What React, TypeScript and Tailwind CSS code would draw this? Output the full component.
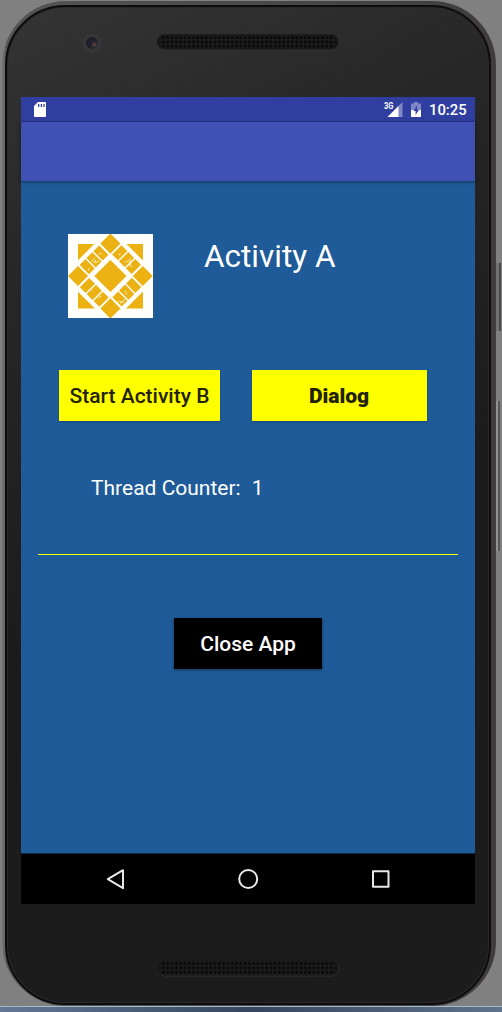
import React from "react";

const GOLD = "#ecb213";

function Grille({ id }: { id: string }) {
  return (
    <svg width="184" height="18" viewBox="0 0 184 18" className="block">
      <defs>
        <pattern id={id} width="4.3" height="4.3" patternUnits="userSpaceOnUse" x="1" y="2.6">
          <rect width="4.3" height="4.3" fill="#1a1a1a" />
          <circle cx="2.1" cy="2.1" r="1.2" fill="#020202" />
        </pattern>
      </defs>
      <rect x="1.5" y="2" width="181.5" height="15" rx="7.5" fill="#171717" stroke="#3c3c3c" strokeOpacity="0.7" />
      <rect x="1" y="1.3" width="181.5" height="15" rx="7.5" fill="#171717" />
      <rect x="4.3" y="2.6" width="175" height="12.9" rx="5" fill={`url(#${id})`} />
    </svg>
  );
}

function Logo() {
  const cells = [-14, -4.3, 5.4];
  return (
    <svg width="85" height="84" viewBox="0 0 85 84" className="block">
      <rect width="85" height="84" fill="#fffefa" />
      <rect x="10" y="10" width="65" height="64.5" fill={GOLD} />
      <g transform="translate(42.4 42) rotate(45)">
        <rect x="-34" y="-34" width="68" height="68" fill="#fffefa" />
        <rect x="-11.4" y="-11.4" width="22.8" height="22.8" fill={GOLD} />
        {[0, 90, 180, 270].map((a) => (
          <g key={a} transform={`rotate(${a})`} fill={GOLD}>
            <rect x="-30" y="-30" width="14.2" height="14.2" />
            {cells.map((x) => (
              <rect key={x} x={x} y="-29.6" width="8.3" height="13.2" />
            ))}
          </g>
        ))}
      </g>
      <g fill="none" stroke="#fff5d5" strokeWidth="1.2" strokeDasharray="1.4 1">
        <path d="M24 26l3 3 4-2M26 24l2 4M31 20l3-1M20 35l2 1M51 21l2-2M57 28l4-1 2-3M60 31l4 2M62 27l1 5M57 57l2 4M50 67l5 1 2-3M52 69l4-2M30 64l3-2M22 55l2 2" />
      </g>
    </svg>
  );
}

function StatusBar() {
  return (
    <div className="flex h-[25px] shrink-0 items-start bg-[#303f9f] pl-[13px] pr-2 text-white shadow-[inset_0_-1px_1px_#29368c]">
      <svg width="12" height="15" viewBox="0 0 12 15" className="mt-[5px]">
        <path d="M4 0h7q1 0 1 1v13q0 1-1 1H1q-1 0-1-1V4z" fill="#fff" />
        <path d="M4.7 2v3M7.4 2v3M10 2v3" stroke="#303f9f" strokeWidth="1.3" />
      </svg>
      <div className="ml-auto flex items-start">
        <svg width="19" height="16" viewBox="0 0 19 16" className="mt-[4px]">
          <path d="M18.5 1v15h-15z" fill="#7f88c6" />
          <path d="M14.5 5v11h-11z" fill="#fff" />
          <path d="M0 0h9.8v7.5H0z" fill="#303f9f" />
          <text x="0" y="7.7" fill="#fff" fontFamily="Roboto, sans-serif" fontSize="8.6" fontWeight="700" textLength="9.3" lengthAdjust="spacingAndGlyphs">3G</text>
        </svg>
        <svg width="10" height="15" viewBox="0 0 10 15" className="ml-2 mt-[5px]">
          <path d="M3 0h4v1.5h3V8H0V1.5h3z" fill="#7f88c6" />
          <path d="M0 8h10v7H0z" fill="#fff" />
          <path d="M6 3.5L2.5 9H4.6v4L8 7.8H6z" fill="#303f9f" />
        </svg>
        <span className="ml-[8px] mt-[3px] w-[38px] whitespace-nowrap text-[14.8px] font-medium leading-5">10:25</span>
      </div>
    </div>
  );
}

function NavBar() {
  return (
    <div className="flex h-[51px] shrink-0 items-center justify-between bg-black px-[83px] shadow-[inset_0_1px_0_#0e2b45]">
      <svg width="24" height="24" viewBox="0 0 24 24" fill="none" stroke="#e8e8e8" strokeWidth="2" strokeLinejoin="round">
        <path d="M19 3.2v18L3.8 12.2z" />
      </svg>
      <svg width="24" height="24" viewBox="0 0 24 24" fill="none" stroke="#e8e8e8" strokeWidth="2">
        <circle cx="12.2" cy="12" r="9" />
      </svg>
      <svg width="24" height="24" viewBox="0 0 24 24" fill="none" stroke="#e8e8e8" strokeWidth="2" strokeLinejoin="round">
        <path d="M5 4.2h15.5v15.5h-15.5z" />
      </svg>
    </div>
  );
}

function Screen() {
  return (
    <div className="flex h-[807px] w-[454px] flex-col bg-[#1e5b98] font-[Roboto,sans-serif]">
      <StatusBar />
      <div className="h-[59px] shrink-0 bg-[#3f51b5] shadow-[0_1px_4px_rgba(0,0,0,0.45)]" />
      <main className="flex min-h-0 flex-1 flex-col text-white">
        <div className="mt-[53px] flex pl-[47px]">
          <Logo />
          <h1 className="ml-[51px] mt-[3px] whitespace-nowrap text-[31.5px] leading-10">Activity A</h1>
        </div>
        <div className="mt-[52px] flex gap-8 pl-[38px] text-[21px] text-[#222200]">
          <button className="h-[51px] w-[161px] whitespace-nowrap bg-[#ffff00] pt-0.5 font-medium shadow-[0_1px_2px_rgba(0,0,0,0.2)]">Start Activity B</button>
          <button className="h-[51px] w-[175px] bg-[#ffff00] pr-px pt-0.5 font-black shadow-[0_1px_2px_rgba(0,0,0,0.2)]">Dialog</button>
        </div>
        <div className="mt-[51px] flex gap-[11px] pl-[70px] text-[21px] leading-8">
          <span className="whitespace-nowrap">Thread Counter:</span>
          <span>1</span>
        </div>
        <div className="mx-[17px] mt-[50px] h-px shrink-0 bg-[#ffff00]" />
        <button className="ml-[153px] mt-[63px] h-[51px] w-[148px] bg-black pt-0.5 text-[21px] font-medium shadow-[0_1px_3px_rgba(0,0,0,0.4)]">Close App</button>
      </main>
      <NavBar />
    </div>
  );
}

export default function App() {
  return (
    <div className="relative h-[1012px] w-[502px] overflow-hidden bg-[#808080]">
      <div className="absolute left-[496px] top-[263px] h-[68px] w-[5px] border-r-2 border-[#4b4b4b] bg-[#717171]" />
      <div className="absolute left-[496px] top-[401px] h-[150px] w-[4px] border-r-2 border-[#555555] bg-[#929292]" />
      <div className="h-[1006px] pl-[2px] pt-px">
        <div className="h-[1005px] w-[494px] rounded-[64px] bg-linear-to-r from-[#777777] via-[#555555] via-[1%] to-[#403c3e] pb-px pl-[3px] pr-[5px] pt-[4px]">
          <div className="h-full rounded-[60px] border-2 border-[#0d0d0d] bg-[#292929] p-px">
            <div className="flex h-full flex-col rounded-[57px] bg-[linear-gradient(155deg,#343434_0%,#272727_22%,#1b1b1b_55%,#1c1c1c_100%)]">
              <div className="flex h-[89px] shrink-0 items-start pl-[74px] pt-[25px]">
                <div className="flex size-5 items-center justify-center rounded-full bg-[#363636]">
                  <div className="size-3 rounded-full bg-[radial-gradient(circle_at_70%_65%,#694949_0%,#292633_25%,#1b1b24_70%)]" />
                </div>
                <div className="ml-[54px]">
                  <Grille id="speaker-top" />
                </div>
              </div>
              <div className="pl-[13px]">
                <Screen />
              </div>
              <div className="mt-[55px] pl-[148px]">
                <Grille id="speaker-bottom" />
              </div>
            </div>
          </div>
        </div>
      </div>
      <div className="h-1.5 border-t border-[#a7bac9] bg-linear-to-r from-[#627895] via-[#34465e] to-[#60738c]" />
    </div>
  );
}
